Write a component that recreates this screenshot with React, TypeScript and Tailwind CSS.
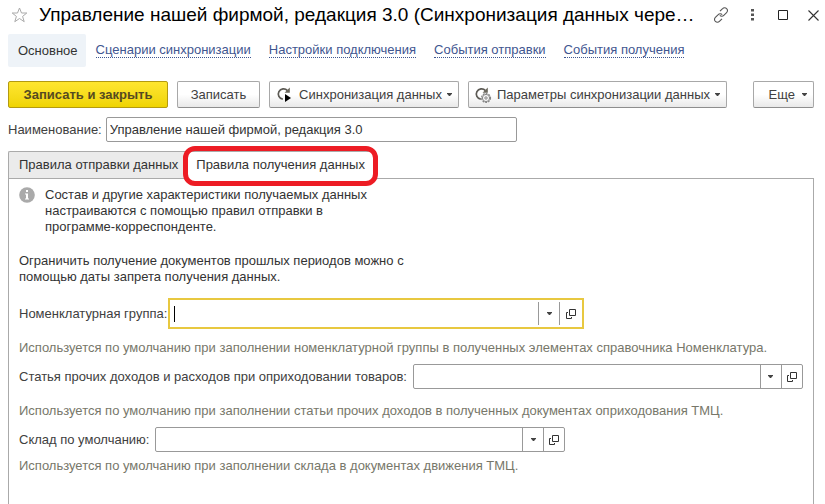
import type { ReactNode } from "react";

const links = [
  "Сценарии синхронизации",
  "Настройки подключения",
  "События отправки",
  "События получения",
];

function Caret() {
  return (
    <svg width="5" height="3" viewBox="0 0 5 3" fill="#444" className="shrink-0" aria-hidden="true">
      <path d="M0 0h5v0.8L3 3H2L0 0.8z" />
    </svg>
  );
}

function OpenIcon() {
  return (
    <svg width="10" height="10" viewBox="0 0 10 10" fill="none" stroke="#333" aria-hidden="true">
      <path d="M3.5 0.5h6v6h-6z" />
      <path d="M2 3.5H0.5v6h5V8" />
    </svg>
  );
}

function SyncIcon({ gear = false }: { gear?: boolean }) {
  return (
    <svg width="18" height="18" viewBox="0 0 18 18" fill="none" className="shrink-0" aria-hidden="true">
      <path d="M11.4 4.6A5.2 5.2 0 1 0 6.8 13.2" stroke="#5c5a54" strokeWidth="1.7" />
      <path d="M13.8 1.6v5.2H8.6z" fill="#6a675c" />
      {gear ? (
        <g stroke="#858585">
          <circle cx="12" cy="12" r="4.5" strokeWidth="1.2" strokeDasharray="1.9 1" />
          <circle cx="12" cy="12" r="3.6" fill="#f6f6f6" />
          <circle cx="12" cy="12" r="1.2" />
        </g>
      ) : (
        <path d="M9 8v8l6-4z" fill="#000" />
      )}
    </svg>
  );
}

function ToolButton({ children, className = "" }: { children: ReactNode; className?: string }) {
  return (
    <button
      type="button"
      className={`flex h-[27px] shrink-0 items-center whitespace-nowrap rounded-xs border border-[#a8a8a8] border-b-[#8e8e8e] bg-linear-to-b from-white from-50% to-[#e9e9e9] text-[#404040] ${className}`}
    >
      {children}
    </button>
  );
}

interface PickerProps {
  id: string;
  label: string;
  className: string;
  active?: boolean;
}

function Picker({ id, label, className, active = false }: PickerProps) {
  return (
    <div className="flex items-center">
      <label htmlFor={id} className="shrink-0 whitespace-nowrap text-[#404040]">
        {label}
      </label>
      <div
        className={`flex min-w-0 flex-1 items-stretch bg-white ${
          active ? "ml-px h-[31px] border-2 border-[#e8c840] py-0.5" : "ml-1.5 h-[25px] rounded-xs border border-[#999]"
        } ${className}`}
      >
        <div className="flex min-w-0 flex-1 items-center pl-1">
          {active && <span className="h-4 w-px shrink-0 bg-black" />}
          <input id={id} type="text" className="h-full w-full min-w-0 bg-transparent outline-none" />
        </div>
        <button
          type="button"
          aria-label={`${label} выбрать из списка`}
          className="flex w-[21px] items-center justify-center border-l border-[#999]"
        >
          <Caret />
        </button>
        <button
          type="button"
          aria-label={`${label} открыть`}
          className={`flex items-center justify-center border-l border-[#999] ${active ? "w-[23px]" : "w-[21px]"}`}
        >
          <OpenIcon />
        </button>
      </div>
    </div>
  );
}

export default function App() {
  return (
    <div className="flex min-h-screen flex-col bg-white px-2 font-['Liberation_Sans',Arial,sans-serif] text-[13px] leading-4 text-[#333]">
      {/* Title bar */}
      <header className="-mr-2 flex h-[30px] items-center pl-[3px]">
        <button type="button" aria-label="Добавить в избранное">
          <svg width="17" height="16" viewBox="0 0 17 16" fill="none" stroke="#aaa">
            <path d="M8.5 1l2 5h5.3l-4.2 3.4 1.6 5.3-4.7-3.2-4.7 3.2 1.6-5.3L1.2 6h5.3z" />
          </svg>
        </button>
        <h1 className="ml-[11px] min-w-0 flex-1 truncate text-[19px] leading-7 font-normal text-black">
          Управление нашей фирмой, редакция 3.0 (Синхронизация данных чере…
        </h1>
        <div className="flex shrink-0 items-center pr-[6px]">
          <button type="button" aria-label="Получить ссылку">
            <svg width="16" height="16" viewBox="0 0 16 16" fill="none" stroke="#555" strokeWidth="1.1">
              <path d="M7 4.2l2.6-2.6a2.7 2.7 0 0 1 4 0 2.7 2.7 0 0 1 0 4L10.8 8.4a2.7 2.7 0 0 1-4 0" />
              <path d="M9 11.8l-2.6 2.6a2.7 2.7 0 0 1-4 0 2.7 2.7 0 0 1 0-4l2.8-2.8a2.7 2.7 0 0 1 4 0" />
            </svg>
          </button>
          <button type="button" aria-label="Меню" className="ml-[22px]">
            <svg width="3" height="12" viewBox="0 0 3 12" fill="#555">
              <path d="M0 0h3v2.5H0zM0 4.5h3V7H0zM0 9h3v2.5H0z" />
            </svg>
          </button>
          <button type="button" aria-label="Развернуть" className="ml-6">
            <svg width="10" height="10" viewBox="0 0 10 10" fill="none" stroke="#222">
              <path d="M0.5 0.5h9v9h-9z" />
            </svg>
          </button>
          <button type="button" aria-label="Закрыть" className="ml-5">
            <svg width="11" height="11" viewBox="0 0 11 11" stroke="#333" strokeWidth="1.1">
              <path d="M0.5 0.5l10 10M10.5 0.5l-10 10" />
            </svg>
          </button>
        </div>
      </header>

      {/* Section links */}
      <nav className="mt-1 flex items-center gap-[18px] whitespace-nowrap">
        <span className="-mr-2 flex h-[33px] items-center rounded-xs bg-[#eef3f8] pr-2 pl-[10px]">Основное</span>
        {links.map((link) => (
          <a key={link} href="#" className="border-b border-dotted border-[#3f5690] leading-[14px] text-[#3f5690]">
            {link}
          </a>
        ))}
      </nav>

      {/* Commands */}
      <div className="mt-[14px] flex gap-[9px]">
        <button
          type="button"
          className="h-[27px] w-40 shrink-0 whitespace-nowrap rounded-xs border border-[#b39a10] bg-linear-to-b from-[#ffe62e] to-[#efd400] font-bold text-[#554a20]"
        >
          Записать и закрыть
        </button>
        <ToolButton className="w-[83px] justify-center">Записать</ToolButton>
        <ToolButton className="w-[190px] justify-between pr-1.5 pl-[6px]">
          <SyncIcon />
          Синхронизация данных
          <Caret />
        </ToolButton>
        <ToolButton className="w-[259px] justify-between pr-1.5 pl-[5px]">
          <SyncIcon gear />
          Параметры синхронизации данных
          <Caret />
        </ToolButton>
        <ToolButton className="mr-[3px] ml-auto w-[61px] justify-end gap-[7px] pr-1.5">
          Еще
          <Caret />
        </ToolButton>
      </div>

      <div className="mt-[9px] flex items-center">
        <label htmlFor="name" className="shrink-0 text-[#404040]">
          Наименование:
        </label>
        <input
          id="name"
          type="text"
          defaultValue="Управление нашей фирмой, редакция 3.0"
          className="ml-1 h-[25px] w-full max-w-[411px] rounded-xs border border-[#999] px-[3px] outline-none"
        />
      </div>

      {/* Tabs */}
      <div role="tablist" className="mt-[9px] mr-[3px] flex h-7 border-b border-[#aaa]">
        <button
          type="button"
          role="tab"
          aria-selected="false"
          className="rounded-tl-xs border-t border-l border-[#aaa] bg-[#ebebeb] pr-2 pl-[10px] whitespace-nowrap"
        >
          Правила отправки данных
        </button>
        <button
          type="button"
          role="tab"
          aria-selected="true"
          className="relative -mb-px border-t border-[#aaa] bg-white px-[10px] pb-0.5 whitespace-nowrap"
        >
          Правила получения данных
          <span className="pointer-events-none absolute -inset-x-[3px] -top-1.5 -bottom-[7px] rounded-[12px] border-5 border-[#ed1c24]" />
        </button>
      </div>

      <main className="mr-[3px] flex-1 border-x border-[#aaa] px-[10px] pt-2">
        <div className="flex gap-[10px]">
          <svg width="16" height="16" viewBox="0 0 16 16" className="shrink-0" aria-hidden="true">
            <circle cx="8" cy="8" r="7.8" fill="#aaa" />
            <path d="M7 3h2v2H7zM6 6.5h3v5h1v1H6v-1h1v-4H6z" fill="#fff" />
          </svg>
          <p className="max-w-[340px]">
            Состав и другие характеристики получаемых данных настраиваются с помощью правил отправки в
            программе-корреспонденте.
          </p>
        </div>
        <p className="mt-[18px] max-w-[400px]">
          Ограничить получение документов прошлых периодов можно с помощью даты запрета получения данных.
        </p>

        <div className="mt-[13px]">
          <Picker id="group" label="Номенклатурная группа:" className="max-w-[416px]" active />
          <p className="mt-[11px] text-[#77776a]">
            Используется по умолчанию при заполнении номенклатурной группы в полученных элементах справочника
            Номенклатура.
          </p>
        </div>
        <div className="mt-2">
          <Picker
            id="income"
            label="Статья прочих доходов и расходов при оприходовании товаров:"
            className="max-w-[390px]"
          />
          <p className="mt-[14px] text-[#77776a]">
            Используется по умолчанию при заполнении статьи прочих доходов в полученных документах оприходования ТМЦ.
          </p>
        </div>
        <div className="mt-2">
          <Picker id="stock" label="Склад по умолчанию:" className="max-w-[410px]" />
          <p className="mt-[6px] text-[#77776a]">
            Используется по умолчанию при заполнении склада в документах движения ТМЦ.
          </p>
        </div>
      </main>
    </div>
  );
}
